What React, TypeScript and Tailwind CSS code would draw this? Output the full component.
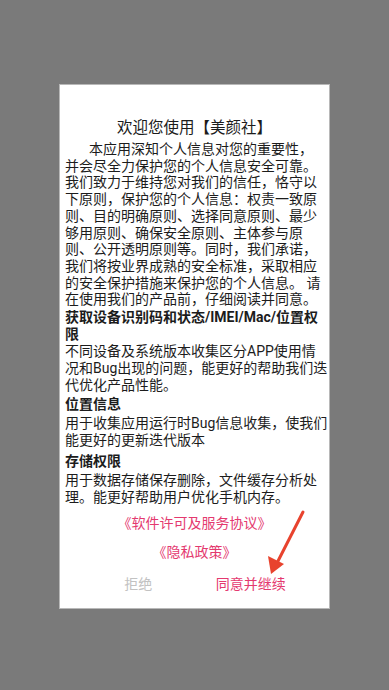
import React from "react";

const font = { fontFamily: 'Roboto, "Noto Sans CJK SC", "Noto Sans", sans-serif' };

export default function App() {
  return (
    <div className="relative flex h-[690px] w-[389px] items-start justify-center bg-[#7a7a7a] pt-[85px]" style={font}>
      <div className="w-[269px] bg-white pb-[14px] shadow-[0_0_0_1px_#b8b8b8]">
        <div className="pt-[32px] text-center text-[15.5px] leading-[22px] text-[#1c1c1c]">欢迎您使用【美颜社】</div>
        <div className="mt-[2px] pl-[5px] pr-0 text-[14px] leading-[16.7px] text-[#1c1c1c]">
          <p className="indent-[24px] pr-[6px]">
            本应用深知个人信息对您的重要性，并会尽全力保护您的个人信息安全可靠。我们致力于维持您对我们的信任，恪守以下原则，保护您的个人信息：权责一致原则、目的明确原则、选择同意原则、最少够用原则、确保安全原则、主体参与原则、公开透明原则等。同时，我们承诺，我们将按业界成熟的安全标准，采取相应的安全保护措施来保护您的个人信息。 请在使用我们的产品前，仔细阅读并同意。
          </p>
          <p className="mt-[1px] font-bold">获取设备识别码和状态/IMEI/Mac/位置权限</p>
          <p className="mt-[1px]">不同设备及系统版本收集区分APP使用情况和Bug出现的问题，能更好的帮助我们迭代优化产品性能。</p>
          <p className="mt-[2px] font-bold">位置信息</p>
          <p className="mt-[3px]">用于收集应用运行时Bug信息收集，使我们能更好的更新迭代版本</p>
          <p className="mt-[4px] font-bold">存储权限</p>
          <p className="mt-[3px]">用于数据存储保存删除，文件缓存分析处理。能更好帮助用户优化手机内存。</p>
        </div>
        <div className="mt-[7px] text-center text-[14px] leading-[20px] text-[#e4396f]">《软件许可及服务协议》</div>
        <div className="mt-[9px] text-center text-[14px] leading-[20px] text-[#e4396f]">《隐私政策》</div>
        <div className="mt-[12px] flex px-[22px] text-[14px] leading-[20px]">
          <div className="flex-1 text-center text-[#c2c2c2]">拒绝</div>
          <div className="flex-1 text-center text-[#e4396f]">同意并继续</div>
        </div>
      </div>
      <svg className="absolute left-0 top-0" width="389" height="690" viewBox="0 0 389 690">
        <line x1="303" y1="512" x2="277" y2="563" stroke="#e8432e" strokeWidth="3" strokeLinecap="round" />
        <polygon points="271,574 268,556 284,564" fill="#e8432e" />
      </svg>
    </div>
  );
}
